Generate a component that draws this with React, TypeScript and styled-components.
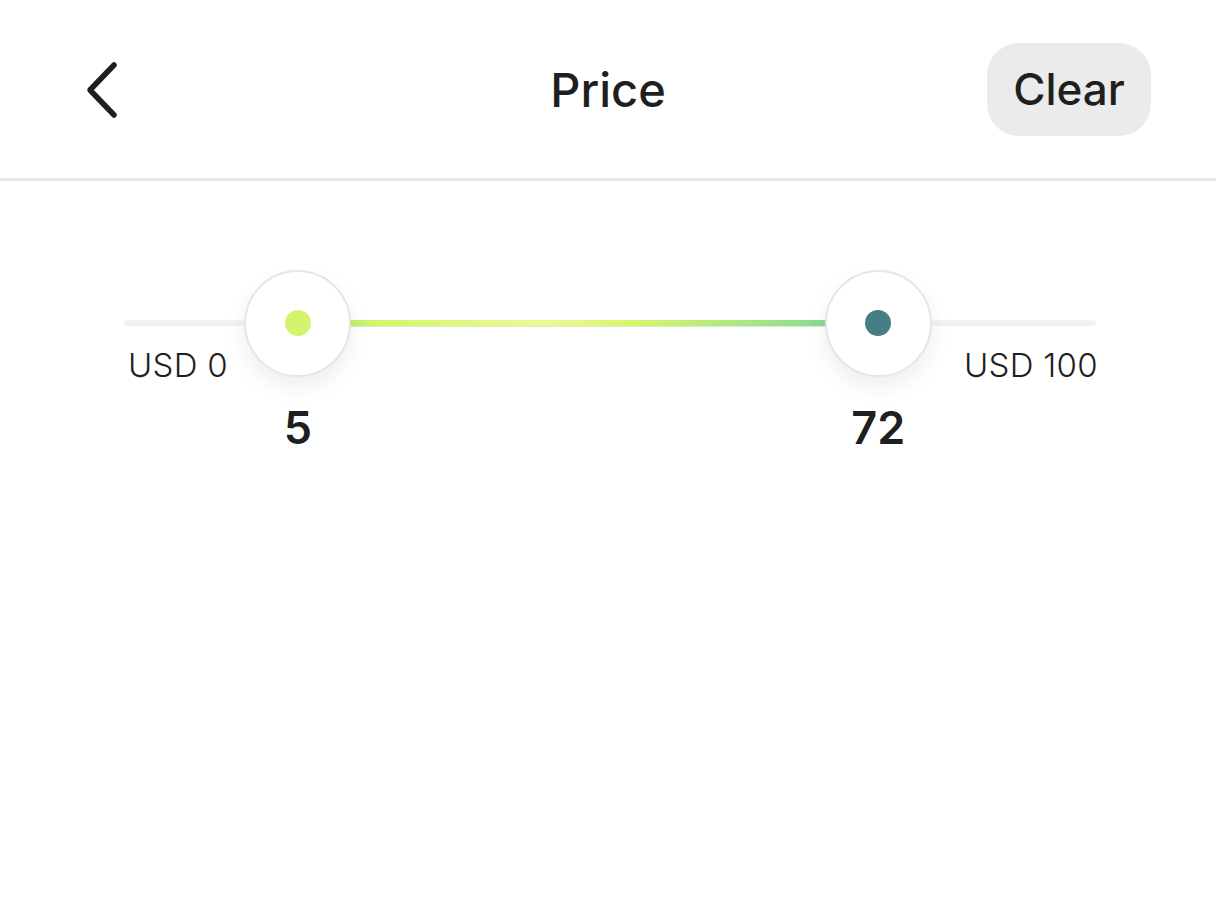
import React from 'react';
import styled, { createGlobalStyle } from 'styled-components';

const GlobalStyle = createGlobalStyle`
    html, body {
        margin: 0;
        padding: 0;
        background: #fff;
    }
    body {
        font-family: Inter, "Liberation Sans", sans-serif;
        color: #1f1f1f;
    }
`;

const Page = styled.div`
    width: 1216px;
    min-height: 904px;
    background: #fff;
`;

const Header = styled.header`
    height: 178px;
    display: grid;
    grid-template-columns: 1fr auto 1fr;
    align-items: center;
    padding: 0 65px;
    border-bottom: 3px solid #e8e8e8;
    box-sizing: content-box;
`;

const BackButton = styled.button`
    justify-self: start;
    width: 44px;
    height: 64px;
    margin: 2px 0 0 15px;
    padding: 0;
    border: none;
    background: none;
    display: flex;
    align-items: center;
    justify-content: center;
    cursor: pointer;
`;

const Title = styled.h1`
    margin: 0;
    font-size: 47px;
    font-weight: 500;
    color: #1f1f1f;
`;

const ClearButton = styled.button`
    justify-self: end;
    width: 164px;
    height: 93px;
    border: none;
    border-radius: 32px;
    background: #ebebeb;
    font-family: inherit;
    font-size: 44px;
    font-weight: 500;
    color: #1f1f1f;
    cursor: pointer;
`;

const SliderSection = styled.section`
    padding: 139px 118px 0 124px;
`;

const Rail = styled.div`
    position: relative;
    height: 6px;
    margin-right: 2px;
    border-radius: 3px;
    background: #f2f2f2;
`;

const Fill = styled.div`
    position: absolute;
    top: 0;
    height: 6px;
    background: linear-gradient(
        90deg,
        #9fe27e 0%,
        #d6f46a 14%,
        #ecfa94 42%,
        #d8f46c 58%,
        #a4e486 80%,
        #70d49c 100%
    );
    box-shadow: 0 1px 0 rgba(110, 205, 130, 0.35);
`;

const Handle = styled.div`
    position: absolute;
    top: 3px;
    width: 0;
    height: 0;
`;

const Knob = styled.div`
    position: absolute;
    left: -53.5px;
    top: -53.5px;
    width: 103px;
    height: 103px;
    border-radius: 50%;
    background: #fff;
    border: 2px solid #e6e6e6;
    box-shadow: 0 10px 22px rgba(0, 0, 0, 0.07);
    display: flex;
    align-items: center;
    justify-content: center;
`;

const Dot = styled.span<{ $color: string }>`
    width: 26px;
    height: 26px;
    border-radius: 50%;
    background: ${p => p.$color};
`;

const Value = styled.div`
    position: absolute;
    top: 77px;
    left: -60px;
    width: 120px;
    text-align: center;
    font-size: 45px;
    font-weight: 600;
    color: #1f1f1f;
`;

const Bounds = styled.div`
    display: flex;
    justify-content: space-between;
    margin-top: 19px;
    padding-left: 4px;
    font-size: 33px;
    font-weight: 300;
    letter-spacing: 0.3px;
    color: #1f1f1f;
`;

const ChevronLeft = () => (
    <svg width="36" height="58" viewBox="0 0 36 58" fill="none">
        <path d="M30 4 L6 29 L30 54" stroke="#1f1f1f" strokeWidth="5.5" strokeLinecap="round" strokeLinejoin="round" />
    </svg>
);

// pos = centre of the handle along the rail, in %
const handles = [
    { value: 5, pos: 17.9, color: '#d4f46f' },
    { value: 72, pos: 77.6, color: '#467e84' },
];

const App: React.FC = () => {
    const [low, high] = handles;
    return (
        <Page>
            <GlobalStyle />
            <Header>
                <BackButton aria-label="Back">
                    <ChevronLeft />
                </BackButton>
                <Title>Price</Title>
                <ClearButton>Clear</ClearButton>
            </Header>
            <SliderSection>
                <Rail>
                    <Fill style={{ left: `${low.pos}%`, width: `${high.pos - low.pos}%` }} />
                    {handles.map(h => (
                        <Handle key={h.value} style={{ left: `${h.pos}%` }}>
                            <Knob>
                                <Dot $color={h.color} />
                            </Knob>
                            <Value>{h.value}</Value>
                        </Handle>
                    ))}
                </Rail>
                <Bounds>
                    <span>USD 0</span>
                    <span>USD 100</span>
                </Bounds>
            </SliderSection>
        </Page>
    );
};

export default App;
